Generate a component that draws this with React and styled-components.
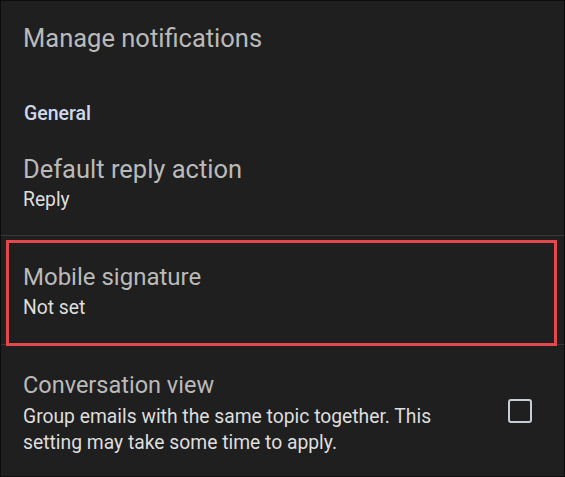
import React from "react";
import styled, { createGlobalStyle } from "styled-components";

const Global = createGlobalStyle`
  html, body { margin: 0; padding: 0; background: #1f1f1f; }
  body { font-family: Roboto, "Noto Sans", sans-serif; }
`;

const Screen = styled.div`
  box-sizing: border-box;
  width: 565px;
  height: 477px;
  background: #1f1f1f;
  border: 1px solid #0c0c0c;
  overflow: hidden;
  display: flex;
  flex-direction: column;
`;

const Row = styled.div`
  position: relative;
  display: flex;
  align-items: center;
  padding: ${(p) => p.$pad || "0"};
  padding-left: 22px;
  border-bottom: ${(p) => (p.$divider ? "1px solid #383838" : "none")};
`;

const TextCol = styled.div`
  flex: 1;
  min-width: 0;
  max-width: ${(p) => p.$max || "none"};
  display: flex;
  flex-direction: column;
`;

const Title = styled.div`
  font-size: ${(p) => p.$size || "24px"};
  line-height: 32px;
  color: #bababa;
`;

const Summary = styled.div`
  font-size: 19.3px;
  line-height: ${(p) => p.$lh || "30px"};
  margin-top: ${(p) => p.$mt || "0"};
  color: #dedede;
`;

const SectionHeader = styled.div`
  padding: 48px 22px 0 23px;
  font-size: 19.5px;
  line-height: 24px;
  font-weight: 500;
  color: #cfd8ec;
`;

const Highlight = styled.div`
  position: absolute;
  left: 5px;
  right: 7px;
  top: 4px;
  height: 106px;
  box-sizing: border-box;
  border: 3px solid #e2484c;
  pointer-events: none;
`;

const CheckBox = styled.div`
  box-sizing: border-box;
  width: 24px;
  height: 24px;
  margin: -3px 32px 0 auto;
  border: 2.5px solid #c8ccd6;
  border-radius: 3px;
  flex-shrink: 0;
`;

export default function App() {
  return (
    <>
      <Global />
      <Screen>
        <Row $pad="21px 0 0 0">
          <TextCol>
            <Title $size="25.5px">Manage notifications</Title>
          </TextCol>
        </Row>
        <SectionHeader>General</SectionHeader>
        <Row $pad="27px 0 20px 0" $divider>
          <TextCol>
            <Title $size="25.5px">Default reply action</Title>
            <Summary>Reply</Summary>
          </TextCol>
        </Row>
        <Row $pad="25px 0 21px 0" $divider>
          <TextCol>
            <Title>Mobile signature</Title>
            <Summary>Not set</Summary>
          </TextCol>
          <Highlight />
        </Row>
        <Row $pad="24px 0 20px 0">
          <TextCol $max="460px">
            <Title $size="23.5px">Conversation view</Title>
            <Summary $lh="26px" $mt="3px">
              Group emails with the same topic together. This setting may take
              some time to apply.
            </Summary>
          </TextCol>
          <CheckBox />
        </Row>
      </Screen>
    </>
  );
}
